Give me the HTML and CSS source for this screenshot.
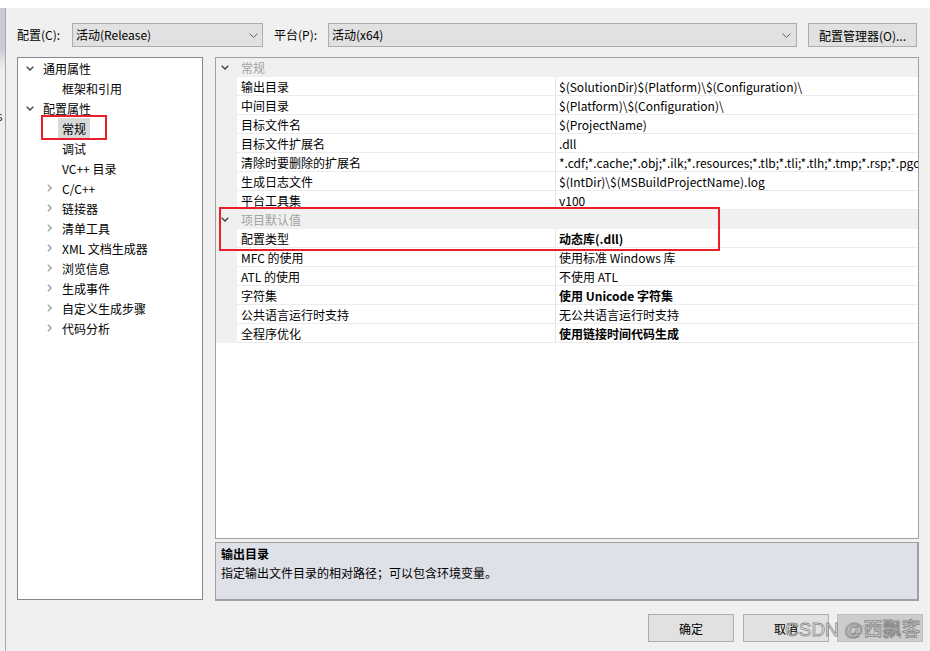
FILE: index.html
```html
<!DOCTYPE html>
<html lang="zh-CN">
<head>
<meta charset="utf-8">
<title>属性页</title>
<link rel="stylesheet" href="styles.css">
</head>
<body>
<div class="titlebar"></div>
<div class="window">
  <div class="behind"><span class="behind-s">s</span></div>
  <div class="dialog">
    <div class="toprow">
      <span class="lbl lbl-config">配置(C):</span>
      <div class="combo combo-config">
        <span class="combo-text">活动(Release)</span>
        <svg class="combo-arrow" width="9" height="5" viewBox="0 0 9 5"><polyline points="0.5,0.5 4.5,4.5 8.5,0.5" fill="none" stroke="#606060" stroke-width="1"/></svg>
      </div>
      <span class="lbl lbl-platform">平台(P):</span>
      <div class="combo combo-platform">
        <span class="combo-text">活动(x64)</span>
        <svg class="combo-arrow" width="9" height="5" viewBox="0 0 9 5"><polyline points="0.5,0.5 4.5,4.5 8.5,0.5" fill="none" stroke="#606060" stroke-width="1"/></svg>
      </div>
      <div class="btn btn-manager">配置管理器(O)...</div>
    </div>

    <div class="panels">
      <div class="tree">
        <div class="trow lv1"><span class="tw"><svg width="8" height="5" viewBox="0 0 8 5"><polyline points="0.7,0.7 4,4 7.3,0.7" fill="none" stroke="#4a4a4a" stroke-width="1.5"/></svg></span><span class="tl">通用属性</span></div>
        <div class="trow lv2"><span class="tw"></span><span class="tl">框架和引用</span></div>
        <div class="trow lv1"><span class="tw"><svg width="8" height="5" viewBox="0 0 8 5"><polyline points="0.7,0.7 4,4 7.3,0.7" fill="none" stroke="#4a4a4a" stroke-width="1.5"/></svg></span><span class="tl">配置属性</span></div>
        <div class="trow lv2"><span class="tw"></span><span class="tl sel">常规</span></div>
        <div class="trow lv2"><span class="tw"></span><span class="tl">调试</span></div>
        <div class="trow lv2"><span class="tw"></span><span class="tl">VC++ 目录</span></div>
        <div class="trow lv2"><span class="tw"><svg width="5" height="8" viewBox="0 0 5 8"><polyline points="0.8,0.7 4.1,4 0.8,7.3" fill="none" stroke="#a6a6a6" stroke-width="1.5"/></svg></span><span class="tl">C/C++</span></div>
        <div class="trow lv2"><span class="tw"><svg width="5" height="8" viewBox="0 0 5 8"><polyline points="0.8,0.7 4.1,4 0.8,7.3" fill="none" stroke="#a6a6a6" stroke-width="1.5"/></svg></span><span class="tl">链接器</span></div>
        <div class="trow lv2"><span class="tw"><svg width="5" height="8" viewBox="0 0 5 8"><polyline points="0.8,0.7 4.1,4 0.8,7.3" fill="none" stroke="#a6a6a6" stroke-width="1.5"/></svg></span><span class="tl">清单工具</span></div>
        <div class="trow lv2"><span class="tw"><svg width="5" height="8" viewBox="0 0 5 8"><polyline points="0.8,0.7 4.1,4 0.8,7.3" fill="none" stroke="#a6a6a6" stroke-width="1.5"/></svg></span><span class="tl">XML 文档生成器</span></div>
        <div class="trow lv2"><span class="tw"><svg width="5" height="8" viewBox="0 0 5 8"><polyline points="0.8,0.7 4.1,4 0.8,7.3" fill="none" stroke="#a6a6a6" stroke-width="1.5"/></svg></span><span class="tl">浏览信息</span></div>
        <div class="trow lv2"><span class="tw"><svg width="5" height="8" viewBox="0 0 5 8"><polyline points="0.8,0.7 4.1,4 0.8,7.3" fill="none" stroke="#a6a6a6" stroke-width="1.5"/></svg></span><span class="tl">生成事件</span></div>
        <div class="trow lv2"><span class="tw"><svg width="5" height="8" viewBox="0 0 5 8"><polyline points="0.8,0.7 4.1,4 0.8,7.3" fill="none" stroke="#a6a6a6" stroke-width="1.5"/></svg></span><span class="tl">自定义生成步骤</span></div>
        <div class="trow lv2"><span class="tw"><svg width="5" height="8" viewBox="0 0 5 8"><polyline points="0.8,0.7 4.1,4 0.8,7.3" fill="none" stroke="#a6a6a6" stroke-width="1.5"/></svg></span><span class="tl">代码分析</span></div>
      </div>

      <div class="rightcol">
        <div class="grid">
          <div class="sec"><span class="ind"><svg width="8" height="5" viewBox="0 0 8 5"><polyline points="0.7,0.7 4,4 7.3,0.7" fill="none" stroke="#4a4a4a" stroke-width="1.5"/></svg></span><span class="sec-title">常规</span></div>
          <div class="row"><span class="ind"></span><span class="name">输出目录</span><span class="val">$(SolutionDir)$(Platform)\$(Configuration)\</span></div>
          <div class="row"><span class="ind"></span><span class="name">中间目录</span><span class="val">$(Platform)\$(Configuration)\</span></div>
          <div class="row"><span class="ind"></span><span class="name">目标文件名</span><span class="val">$(ProjectName)</span></div>
          <div class="row"><span class="ind"></span><span class="name">目标文件扩展名</span><span class="val">.dll</span></div>
          <div class="row"><span class="ind"></span><span class="name">清除时要删除的扩展名</span><span class="val">*.cdf;*.cache;*.obj;*.ilk;*.resources;*.tlb;*.tli;*.tlh;*.tmp;*.rsp;*.pgc;*.pgd;*.meta;*.tlog;*.manifest;*.res;*.pch;*.exp;*.idb;*.rep;*.xdc;*.pdb;*_manifest.rc;*.bsc;*.sbr;*.xml;*.metagen;*.bi</span></div>
          <div class="row"><span class="ind"></span><span class="name">生成日志文件</span><span class="val">$(IntDir)\$(MSBuildProjectName).log</span></div>
          <div class="row"><span class="ind"></span><span class="name">平台工具集</span><span class="val">v100</span></div>
          <div class="sec"><span class="ind"><svg width="8" height="5" viewBox="0 0 8 5"><polyline points="0.7,0.7 4,4 7.3,0.7" fill="none" stroke="#4a4a4a" stroke-width="1.5"/></svg></span><span class="sec-title">项目默认值</span></div>
          <div class="row"><span class="ind"></span><span class="name">配置类型</span><span class="val bold">动态库(.dll)</span></div>
          <div class="row"><span class="ind"></span><span class="name">MFC 的使用</span><span class="val">使用标准 Windows 库</span></div>
          <div class="row"><span class="ind"></span><span class="name">ATL 的使用</span><span class="val">不使用 ATL</span></div>
          <div class="row"><span class="ind"></span><span class="name">字符集</span><span class="val bold">使用 Unicode 字符集</span></div>
          <div class="row"><span class="ind"></span><span class="name">公共语言运行时支持</span><span class="val">无公共语言运行时支持</span></div>
          <div class="row"><span class="ind"></span><span class="name">全程序优化</span><span class="val bold">使用链接时间代码生成</span></div>
        </div>
        <div class="desc">
          <div class="desc-title">输出目录</div>
          <div class="desc-text">指定输出文件目录的相对路径；可以包含环境变量。</div>
        </div>
      </div>
    </div>

    <div class="buttons">
      <div class="btn btn-ok">确定</div>
      <div class="btn btn-cancel">取消</div>
      <div class="btn btn-apply">应用(A)</div>
    </div>
  </div>
</div>

<div class="redbox redbox-tree"></div>
<div class="redbox redbox-grid"></div>
<div class="watermark">CSDN @西飘客</div>
</body>
</html>
```

FILE: styles.css
```css
html, body {
  margin: 0;
  padding: 0;
}
body {
  width: 930px;
  height: 651px;
  overflow: hidden;
  background: #ffffff;
  font-family: "Noto Sans CJK SC", sans-serif;
  font-size: 12px;
  color: #000;
  position: relative;
}
.titlebar {
  height: 8px;
  background: #ffffff;
}
.window {
  display: flex;
  height: 643px;
}
.behind {
  width: 5px;
  border-right: 1px solid #a8a8a8;
  background: linear-gradient(#c9ccd6 0, #c9ccd6 40px, #eeeeee 60px, #f0f0f0 100%);
  position: relative;
  overflow: hidden;
}
.behind-s {
  position: absolute;
  left: -3px;
  top: 101px;
  font-size: 12px;
  line-height: 14px;
  color: #333;
}
.dialog {
  flex: 1;
  background: #f0f0f0;
  display: flex;
  flex-direction: column;
}

/* top row */
.toprow {
  display: flex;
  align-items: center;
  margin-top: 15px;
  padding-left: 11px;
  height: 24px;
}
.lbl {
  line-height: 24px;
  white-space: nowrap;
}
.lbl-config { width: 55px; }
.lbl-platform { width: 54px; }
.combo {
  box-sizing: border-box;
  height: 24px;
  background: #e1e1e1;
  border: 1px solid #adadad;
  display: flex;
  align-items: center;
  padding: 0 4px 0 3px;
}
.combo-config { width: 191px; margin-right: 11px; }
.combo-platform { width: 469px; margin-right: 11px; padding-right: 5px; }
.combo-text {
  flex: 1;
  line-height: 22px;
  white-space: nowrap;
}
.combo-arrow { display: block; }
.btn {
  box-sizing: border-box;
  background: #e1e1e1;
  border: 1px solid #adadad;
  display: flex;
  align-items: center;
  justify-content: center;
  white-space: nowrap;
}
.btn-manager { width: 109px; height: 24px; }

/* panels */
.panels {
  display: flex;
  margin-top: 10px;
  padding-left: 11px;
}
.tree {
  box-sizing: border-box;
  width: 186px;
  height: 543px;
  background: #ffffff;
  border: 1px solid #828790;
}
.trow {
  height: 20px;
  display: flex;
  align-items: center;
  gap: 1px;
}
.lv1 { padding-left: 4px; }
.lv2 { padding-left: 23px; }
.tw {
  width: 16px;
  height: 20px;
  display: flex;
  align-items: center;
  justify-content: center;
}
.tw svg { display: block; }
.tl {
  box-sizing: border-box;
  padding: 1px 4px 0;
  height: 20px;
  line-height: 19px;
  white-space: nowrap;
}
.tl.sel { background: #d9d9d9; }

.rightcol {
  margin-left: 12px;
  width: 704px;
  display: flex;
  flex-direction: column;
}
.grid {
  box-sizing: border-box;
  height: 482px;
  background: #ffffff;
  border: 1px solid #a0a0a0;
  overflow: hidden;
}
.sec {
  display: flex;
  height: 19px;
  background: #f0f0f0;
  align-items: center;
}
.ind {
  width: 21px;
  flex: none;
  align-self: stretch;
  background: #f0f0f0;
  display: flex;
  align-items: center;
  padding-left: 5px;
  box-sizing: border-box;
}
.ind svg { display: block; }
.sec-title {
  padding: 1px 0 0 4px;
  color: #a3a3a3;
  line-height: 18px;
}
.row {
  display: flex;
  height: 19px;
}
.name {
  box-sizing: border-box;
  width: 319px;
  flex: none;
  padding: 1px 0 0 4px;
  border-right: 1px solid #e6e6e6;
  border-bottom: 1px solid #ececec;
  line-height: 17px;
  white-space: nowrap;
  overflow: hidden;
}
.val {
  box-sizing: border-box;
  flex: 1;
  min-width: 0;
  padding: 1px 0 0 3px;
  border-bottom: 1px solid #ececec;
  line-height: 17px;
  white-space: nowrap;
  overflow: hidden;
}
.bold { font-weight: bold; }

.desc {
  box-sizing: border-box;
  margin-top: 3px;
  height: 59px;
  background: #dfe1e8;
  border: 1px solid #a0a0a0;
  border-bottom-width: 2px;
  border-right-width: 2px;
  padding: 1px 5px 0;
}
.desc-title {
  font-weight: bold;
  line-height: 19px;
}
.desc-text {
  line-height: 19px;
}

/* bottom buttons */
.buttons {
  display: flex;
  justify-content: flex-end;
  margin-top: 13px;
  padding-right: 7px;
}
.btn-ok, .btn-cancel, .btn-apply {
  width: 86px;
  height: 28px;
}
.btn-ok { margin-right: 9px; }
.btn-cancel { margin-right: 8px; }
.btn-apply {
  background: #cccccc;
  border-color: #bfbfbf;
  color: #b4b4b4;
}

/* annotations */
.redbox {
  position: absolute;
  box-sizing: border-box;
  border: 2px solid #e8202a;
}
.redbox-tree { left: 41px; top: 115px; width: 66px; height: 25px; }
.redbox-grid { left: 219px; top: 207px; width: 501px; height: 44px; }
.watermark {
  position: absolute;
  left: 785px;
  top: 617px;
  font-family: "Liberation Sans", "Noto Sans CJK SC", sans-serif;
  font-size: 19px;
  line-height: 26px;
  color: rgba(255, 255, 255, 0.7);
  -webkit-text-stroke: 0.9px rgba(110, 110, 110, 0.75);
  white-space: nowrap;
}
```
